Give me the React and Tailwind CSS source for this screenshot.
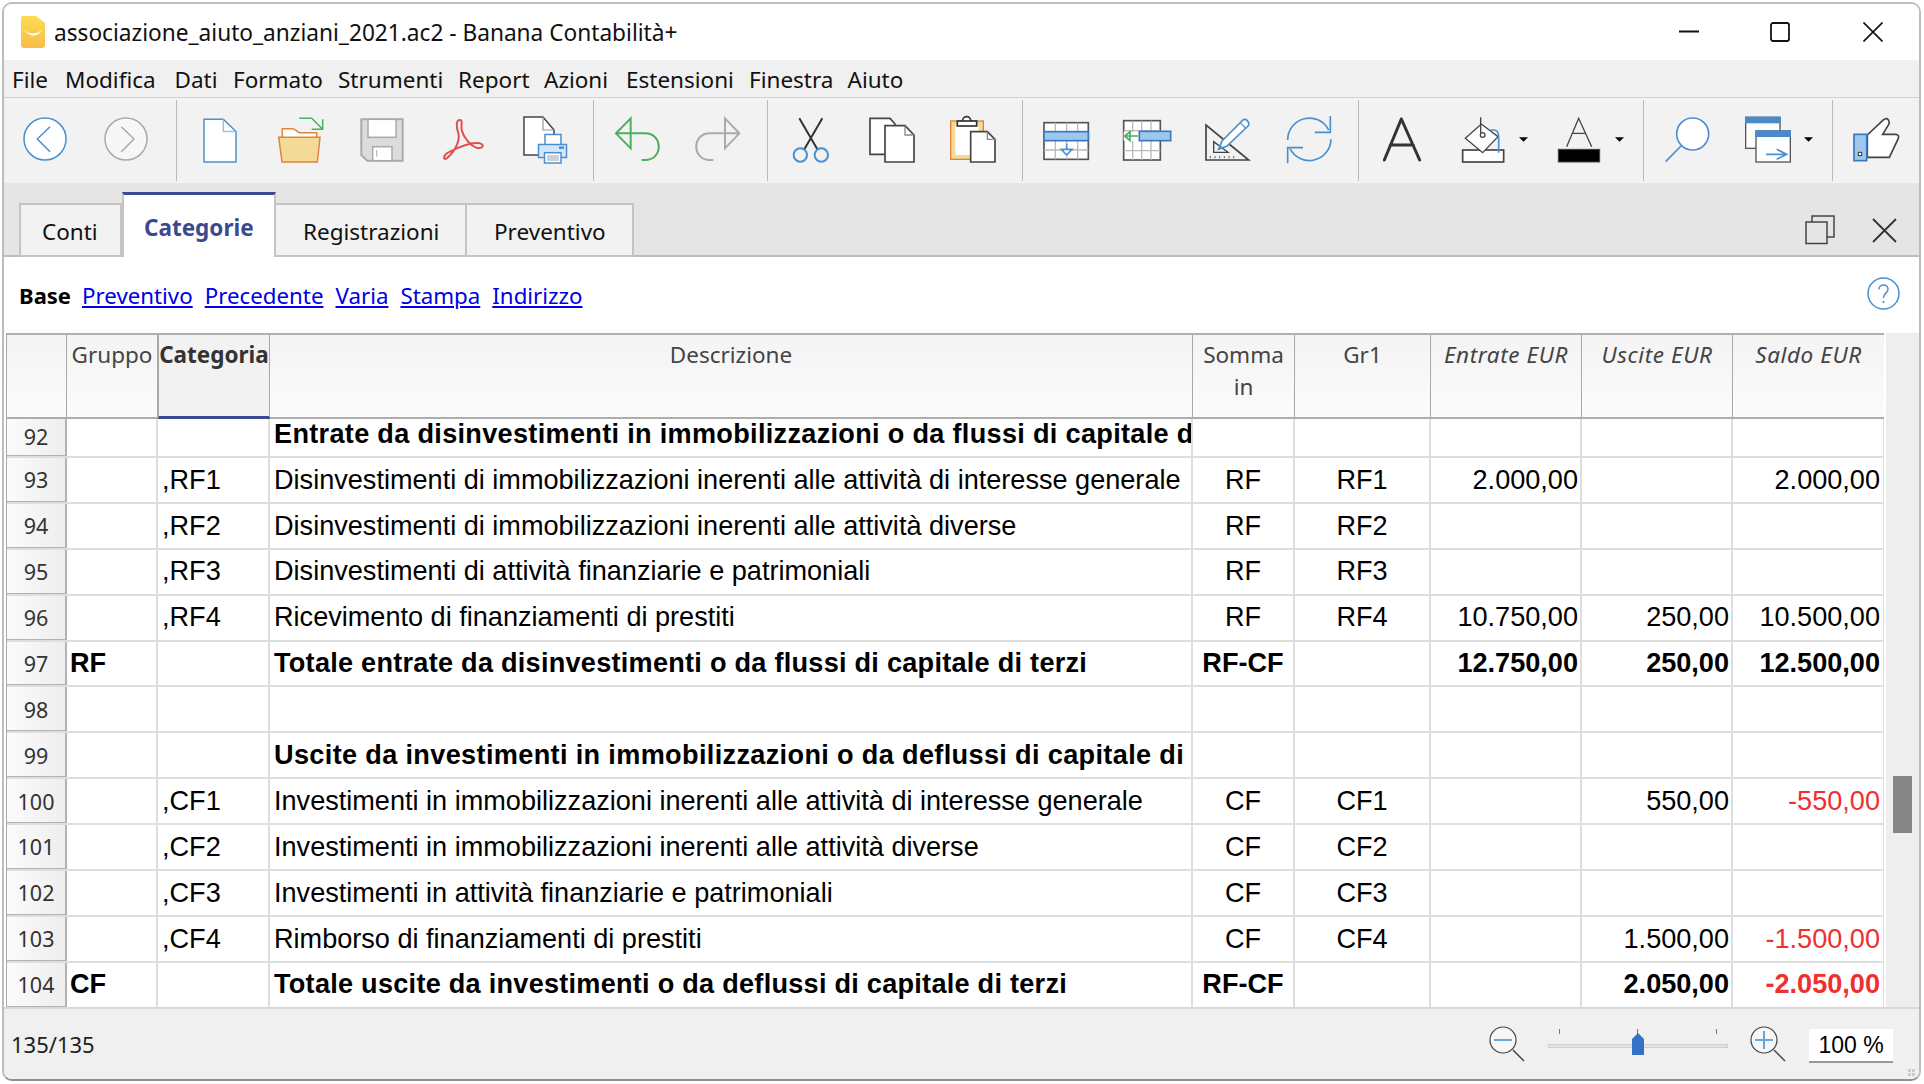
const BLUE = "#4a90d0";
const DARK = "#444";

const menus = [
  ["File", "w-[53px]"],
  ["Modifica", "w-[109.5px]"],
  ["Dati", "w-[58.5px]"],
  ["Formato", "w-[105px]"],
  ["Strumenti", "w-[120px]"],
  ["Report", "w-[86px]"],
  ["Azioni", "w-[82px]"],
  ["Estensioni", "w-[123px]"],
  ["Finestra", "w-[98.5px]"],
  ["Aiuto", "w-[60px]"],
];

const rows = [
  { n: 92, desc: "Entrate da disinvestimenti in immobilizzazioni o da flussi di capitale di terzi", bold: true, first: true, spacing: "tracking-[0.31px]" },
  { n: 93, cat: ",RF1", desc: "Disinvestimenti di immobilizzazioni inerenti alle attività di interesse generale", som: "RF", gr: "RF1", ent: "2.000,00", sal: "2.000,00" },
  { n: 94, cat: ",RF2", desc: "Disinvestimenti di immobilizzazioni inerenti alle attività diverse", som: "RF", gr: "RF2" },
  { n: 95, cat: ",RF3", desc: "Disinvestimenti di attività finanziarie e patrimoniali", som: "RF", gr: "RF3" },
  { n: 96, cat: ",RF4", desc: "Ricevimento di finanziamenti di prestiti", som: "RF", gr: "RF4", ent: "10.750,00", usc: "250,00", sal: "10.500,00" },
  { n: 97, grp: "RF", desc: "Totale entrate da disinvestimenti o da flussi di capitale di terzi", som: "RF-CF", ent: "12.750,00", usc: "250,00", sal: "12.500,00", bold: true, spacing: "tracking-[0.26px]" },
  { n: 98 },
  { n: 99, desc: "Uscite da investimenti in immobilizzazioni o da deflussi di capitale di terzi", bold: true, spacing: "tracking-[0.35px]" },
  { n: 100, cat: ",CF1", desc: "Investimenti in immobilizzazioni inerenti alle attività di interesse generale", som: "CF", gr: "CF1", usc: "550,00", sal: "-550,00" },
  { n: 101, cat: ",CF2", desc: "Investimenti in immobilizzazioni inerenti alle attività diverse", som: "CF", gr: "CF2" },
  { n: 102, cat: ",CF3", desc: "Investimenti in attività finanziarie e patrimoniali", som: "CF", gr: "CF3" },
  { n: 103, cat: ",CF4", desc: "Rimborso di finanziamenti di prestiti", som: "CF", gr: "CF4", usc: "1.500,00", sal: "-1.500,00" },
  { n: 104, grp: "CF", desc: "Totale uscite da investimenti o da deflussi di capitale di terzi", som: "RF-CF", usc: "2.050,00", sal: "-2.050,00", bold: true, spacing: "tracking-[0.26px]" },
];

// icons are drawn in screen coordinates, the viewBox picks out the button's slice
const Btn = ({ from, to, children }) => (
  <svg width={to - from} height={85} viewBox={`${from} 98 ${to - from} 85`} fill="none" className="shrink-0">
    {children}
  </svg>
);

const Z = ({ x, children }) => <g transform={`translate(${x} 100) scale(${1 / 3})`}>{children}</g>;

const Sep = () => <div className="w-px h-[81px] mt-[2px] bg-[#b9b9b9] shrink-0" />;

const Caret = ({ x }) => <path d={`M${x} 112h27l-13.500 13z`} fill="#000" />;

const Toolbar = () => (
  <div className="flex h-[85px] bg-[#f2f2f2] shrink-0">
    <Btn from={4} to={86}>
      <circle cx="45" cy="139" r="21" fill="#fff" stroke={BLUE} strokeWidth="1.500" />
      <path d="M50 126.700L37.300 139L50 151.700" stroke={BLUE} strokeWidth="1.500" />
    </Btn>
    <Btn from={86} to={176}>
      <circle cx="126" cy="139" r="21" fill="#f7f7f7" stroke="#aaa" strokeWidth="1.500" />
      <path d="M121.300 126.700L134 139L121.300 151.700" stroke="#aaa" strokeWidth="1.500" />
    </Btn>
    <Sep />
    <Btn from={177} to={258}>
      <path d="M204 119.300H223.300L236 131.500V162H204Z" fill="#fff" stroke={BLUE} strokeWidth="1.500" />
      <path d="M223.300 119.300V131.500H236" stroke="#9cc3e6" strokeWidth="1.500" />
    </Btn>
    <Btn from={258} to={340}>
      <path d="M299.300 118.300H311.700L322.700 129.300M322.700 119.300V129.300H311.700" stroke="#4caf60" strokeWidth="1.500" />
      <path d="M282.300 137.300V128.700H293.300L299.300 132.700H316.700V137.300" fill="#fff" stroke="#e0843c" strokeWidth="1.500" />
      <path d="M278.700 137.300H320L317.300 162H282Z" fill="#f3da96" stroke="#e0843c" strokeWidth="1.500" />
    </Btn>
    <Btn from={340} to={430}>
      <path d="M361.300 119.300H402.700V160.700H367.300L361.300 155Z" fill="#dcdcdc" stroke="#aaa" strokeWidth="2" />
      <rect x="368" y="119.300" width="28" height="18" fill="#fff" stroke="#aaa" strokeWidth="1.500" />
      <rect x="372.700" y="146.700" width="19.300" height="14" fill="#fff" stroke="#aaa" strokeWidth="1.500" />
      <path d="M376.700 150V156.700" stroke="#aaa" />
    </Btn>
    <Btn from={430} to={515}>
      <Z x={10}>
        <path d="M1350 60C1338 60 1338 80 1345 100C1352 125 1330 160 1310 175C1298 182 1298 165 1320 155C1345 142 1385 125 1410 130C1425 135 1418 147 1400 143C1380 138 1360 110 1355 90C1352 75 1360 60 1350 60Z" stroke="#e05050" strokeWidth="6" />
      </Z>
    </Btn>
    <Btn from={515} to={593}>
      <path d="M524 117H543L554 130V155H524Z" fill="#fff" stroke={DARK} strokeWidth="1.500" />
      <path d="M543 117V130H554" stroke="#999" strokeWidth="1.200" />
      <rect x="545" y="134.500" width="16" height="12" fill="#fff" stroke={BLUE} strokeWidth="1.500" />
      <rect x="538.500" y="144.500" width="28" height="13" fill="#d5e6f6" stroke={BLUE} strokeWidth="1.500" />
      <rect x="559" y="146.500" width="5" height="2.500" fill={BLUE} />
      <rect x="544.500" y="152.700" width="16.500" height="10.300" fill="#fff" stroke={BLUE} strokeWidth="1.500" />
      <path d="M547 156H559M547 158H559M547 160H559" stroke="#888" strokeWidth="0.800" />
    </Btn>
    <Sep />
    <Btn from={594} to={675}>
      <Z x={600}>
        <path d="M92 55L48 100L92 145ZM48 100H135C190 100 190 180 135 180H125" stroke="#4caf60" strokeWidth="6" />
      </Z>
    </Btn>
    <Btn from={675} to={767}>
      <Z x={600}>
        <path d="M375 55L418 100L375 145ZM418 100H330C275 100 275 180 330 180H340" stroke="#aaa" strokeWidth="6" />
      </Z>
    </Btn>
    <Sep />
    <Btn from={768} to={855}>
      <Z x={600}>
        <path d="M598 55L652 148M667 55L613 148" stroke="#333" strokeWidth="6" />
        <circle cx="601" cy="165" r="20" stroke={BLUE} strokeWidth="6" />
        <circle cx="664" cy="165" r="20" stroke={BLUE} strokeWidth="6" />
      </Z>
    </Btn>
    <Btn from={855} to={940}>
      <Z x={600}>
        <path d="M810 55H870L885 72V163H810Z" fill="#fff" stroke={DARK} strokeWidth="5" />
        <path d="M855 77H915L942 105V186H855Z" fill="#fff" stroke={DARK} strokeWidth="5" />
        <path d="M915 77V105H942" stroke="#888" strokeWidth="4" />
      </Z>
    </Btn>
    <Btn from={940} to={1022}>
      <Z x={600}>
        <rect x="1052" y="63" width="98" height="115" fill="#f3da96" stroke="#e0843c" strokeWidth="4" />
        <rect x="1066" y="78" width="70" height="87" fill="#fff" />
        <circle cx="1100" cy="62" r="12" fill="#fff" stroke="#333" strokeWidth="5" />
        <rect x="1072" y="63" width="58" height="15" fill="#fff" stroke="#333" strokeWidth="5" />
        <path d="M1112 95H1162L1185 118V186H1112Z" fill="#fff" stroke={DARK} strokeWidth="5" />
        <path d="M1162 95V118H1185" stroke="#888" strokeWidth="4" />
      </Z>
    </Btn>
    <Sep />
    <Btn from={1023} to={1105}>
      <Z x={600}>
        <rect x="1332" y="68" width="133" height="110" fill="#fff" stroke="#555" strokeWidth="5" />
        <path d="M1366 68V178M1400 68V178M1433 68V178M1332 150H1465" stroke="#bbb" strokeWidth="4" />
        <rect x="1332" y="95" width="133" height="27" fill="#9cc8ee" stroke="#3a78c0" strokeWidth="5" />
        <rect x="1385" y="128" width="30" height="42" fill="#fff" />
        <path d="M1400 130V148M1384 148H1416L1400 165Z" stroke={BLUE} strokeWidth="5" />
      </Z>
    </Btn>
    <Btn from={1105} to={1190}>
      <Z x={1122}>
        <rect x="5" y="62" width="110" height="118" fill="#fff" stroke="#555" strokeWidth="5" />
        <path d="M32 62V180M59 62V180M87 62V180M5 92H115M5 152H115" stroke="#bbb" strokeWidth="4" />
        <rect x="5" y="96" width="46" height="26" fill="#fff" />
        <rect x="52" y="94" width="94" height="28" fill="#9cc8ee" stroke="#3a78c0" strokeWidth="5" />
        <path d="M48 108H12M24 95L8 108L24 122Z" stroke="#4caf60" strokeWidth="5" />
      </Z>
    </Btn>
    <Btn from={1190} to={1270}>
      <Z x={1122}>
        <path d="M252 75V180H380Z" fill="#f2f2f2" stroke={DARK} strokeWidth="5" />
        <path d="M275 125V157H318Z" stroke={DARK} strokeWidth="4" />
        <path d="M265 168V175M279 168V175M293 168V175M307 168V175M321 168V175M335 168V175" stroke="#666" strokeWidth="3" />
        <path d="M290 148L300 123L363 60Q370 56 376 62L380 68Q382 74 378 78L315 138Z" fill="#fff" stroke={BLUE} strokeWidth="5" />
        <path d="M355 68L372 86" stroke={BLUE} strokeWidth="4" />
        <path d="M290 148L295 135L303 143Z" fill={BLUE} />
      </Z>
    </Btn>
    <Btn from={1270} to={1358}>
      <Z x={1122}>
        <path d="M497 120A65 65 0 0 1 620 90M627 118A65 65 0 0 1 504 146" stroke={BLUE} strokeWidth="5" />
        <path d="M625 48V97H578M497 190V143H543" stroke={BLUE} strokeWidth="5" />
      </Z>
    </Btn>
    <Sep />
    <Btn from={1359} to={1440}>
      <Z x={1122}>
        <path d="M787 180L838 57L893 180M805 135H874" stroke="#333" strokeWidth="9" strokeLinecap="round" strokeLinejoin="round" />
      </Z>
    </Btn>
    <Btn from={1440} to={1550}>
      <Z x={1122}>
        <rect x="1022" y="150" width="123" height="36" fill="#fff" stroke={DARK} strokeWidth="5" />
        <path d="M1030 115L1078 72L1128 110L1082 158Z" fill="#fff" stroke={DARK} strokeWidth="4" />
        <path d="M1076 52V100" stroke={DARK} strokeWidth="4" />
        <circle cx="1082" cy="105" r="7" fill="#fff" stroke={DARK} strokeWidth="4" />
        <path d="M1105 90H1116Q1130 90 1130 110V158" stroke={BLUE} strokeWidth="5" />
      </Z>
      <Z x={1500}>
        <Caret x={57} />
      </Z>
    </Btn>
    <Btn from={1550} to={1643}>
      <Z x={1500}>
        <path d="M200 140L236 55L275 140M215 100H258" stroke={DARK} strokeWidth="4" />
        <rect x="175" y="148" width="124" height="38" fill="#000" stroke={DARK} strokeWidth="3" />
        <Caret x={345} />
      </Z>
    </Btn>
    <Sep />
    <Btn from={1644} to={1730}>
      <Z x={1500}>
        <circle cx="578" cy="102" r="48" fill="#fff" stroke={BLUE} strokeWidth="5" />
        <path d="M543 138L497 185" stroke={BLUE} strokeWidth="5" />
      </Z>
    </Btn>
    <Btn from={1730} to={1832}>
      <Z x={1500}>
        <rect x="737" y="52" width="103" height="93" fill="#fff" stroke="#555" strokeWidth="4" />
        <rect x="735" y="50" width="107" height="20" fill="#4a8ac8" />
        <rect x="768" y="93" width="103" height="93" fill="#fff" stroke="#555" strokeWidth="4" />
        <rect x="766" y="91" width="107" height="20" fill="#4a8ac8" />
        <path d="M798 163H860M830 148L860 163L830 178" stroke={BLUE} strokeWidth="5" />
        <Caret x={912} />
      </Z>
    </Btn>
    <Sep />
    <Btn from={1833} to={1919}>
      <Z x={1500}>
        <path d="M1102 105L1150 60Q1165 48 1168 70L1148 103H1188Q1198 105 1195 115L1168 172H1102Z" fill="#fff" stroke={DARK} strokeWidth="5" />
        <rect x="1062" y="103" width="38" height="79" fill="#9cc8ee" stroke="#3a78c0" strokeWidth="5" />
        <rect x="1075" y="157" width="10" height="10" fill="#fff" stroke="#333" strokeWidth="3" />
      </Z>
    </Btn>
  </div>
);

const Tabs = () => (
  <div className="relative flex items-end h-[74px] pl-[15px] pr-[22px] bg-[#e5e5e5] border-b-2 border-[#bdbdbd] shrink-0 font-['Noto_Sans',sans-serif] text-[22.500px] text-[#111]">
    <div className="w-[103px] h-[54px] -mb-[2px] pl-[21px] pt-[10px] bg-[#f2f2f2] border-2 border-[#c4c4c4]">Conti</div>
    <div className="w-[154px] h-[65px] -mb-[2px] pl-[20px] pt-[16px] bg-white border-x-2 border-[#c4c4c4] border-t-[3px] border-t-[#3b4a8f] font-bold text-[#3b4a8f]">Categorie</div>
    <div className="w-[191px] h-[54px] -mb-[2px] pl-[27px] pt-[10px] bg-[#f2f2f2] border-y-2 border-r-2 border-[#c4c4c4]">Registrazioni</div>
    <div className="w-[167px] h-[54px] -mb-[2px] pl-[27px] pt-[10px] bg-[#f2f2f2] border-y-2 border-r-2 border-[#c4c4c4]">Preventivo</div>
    <svg width="30" height="30" viewBox="0 0 30 30" fill="none" className="ml-auto mb-[10px] shrink-0">
      <rect x="7" y="1" width="22" height="21" stroke="#444" strokeWidth="1.500" />
      <rect x="1" y="7" width="21" height="21.500" fill="#e5e5e5" stroke="#444" strokeWidth="1.500" />
    </svg>
    <svg width="25" height="25" viewBox="0 0 25 25" fill="none" className="ml-[37px] mb-[12px] shrink-0">
      <path d="M1 1L24 24M24 1L1 24" stroke="#333" strokeWidth="1.800" />
    </svg>
  </div>
);

const Links = () => (
  <div className="flex items-center h-[76px] pl-[15px] pr-[19px] bg-white shrink-0 font-['Noto_Sans',sans-serif] text-[22.300px] text-[#0000e6]">
    <span className="font-bold text-[22px] text-black mr-[11px]">Base</span>
    <div className="flex gap-[12px] pt-[1px] underline">
      <span>Preventivo</span>
      <span>Precedente</span>
      <span>Varia</span>
      <span>Stampa</span>
      <span>Indirizzo</span>
    </div>
    <svg width="33" height="33" viewBox="0 0 33 33" fill="none" className="ml-auto mb-[4px] shrink-0">
      <circle cx="16.500" cy="16.500" r="15.500" stroke={BLUE} strokeWidth="1.500" />
      <path d="M12 12.500C12 6.500 21 6.500 21 12.500C21 16 16.500 16 16.500 21" stroke={BLUE} strokeWidth="1.500" />
      <circle cx="16.500" cy="25" r="1.100" fill={BLUE} />
    </svg>
  </div>
);

const headCell = "h-full pt-[4px] text-center leading-[32px] border-r border-[#a8a8a8] shrink-0";

const TableHead = () => (
  <div className="flex h-[83.500px] border-b-2 border-[#adadad] bg-linear-to-b from-[#f4f4f4] to-[#fbfbfb] font-['Noto_Sans',sans-serif] text-[22.500px] text-[#444] shrink-0">
    <div className={`${headCell} w-[60px]`} />
    <div className={`${headCell} w-[91px]`}>Gruppo</div>
    <div className="w-[112px] h-[83.500px] pt-[4px] text-center leading-[32px] font-bold text-[#333] bg-[#f2f2f2] border-x border-[#a8a8a8] border-b-[3px] border-b-[#3b4a8f] shrink-0">Categoria</div>
    <div className={`${headCell} w-[923px]`}>Descrizione</div>
    <div className={`${headCell} w-[102px]`}>
      Somma
      <br />
      in
    </div>
    <div className={`${headCell} w-[136px]`}>Gr1</div>
    <div className={`${headCell} w-[151px] italic tracking-[0.6px]`}>Entrate EUR</div>
    <div className={`${headCell} w-[151px] italic tracking-[0.6px]`}>Uscite EUR</div>
    <div className={`${headCell} w-[152px] italic tracking-[0.6px]`}>Saldo EUR</div>
  </div>
);

const cell = "flex items-center h-full overflow-hidden whitespace-nowrap border-r-2 border-[#dedede] shrink-0";

const Row = ({ r }) => {
  const pad = r.first ? "pb-[6px]" : "";
  const red = r.sal && r.sal[0] === "-" ? "text-[#ee3030]" : "";
  return (
    <div className={`flex shrink-0 ${r.first ? "h-[39.500px]" : "h-[45.900px]"} border-b-2 border-[#dedede] font-['Liberation_Sans',sans-serif] text-[27.100px] text-black ${r.bold ? "font-bold" : ""}`}>
      <div className={`flex items-center justify-center w-[60px] h-full -mb-[2px] ${r.first ? "" : "pt-[2px]"} font-['Noto_Sans',sans-serif] font-normal text-[21.500px] text-[#333] bg-linear-to-r from-[#fbfbfb] to-[#eeeeee] border-r-2 border-b border-[#b3b3b3] shrink-0`}>{r.n}</div>
      <div className={`${cell} w-[91px] pl-[3px] ${pad}`}>{r.grp}</div>
      <div className={`${cell} w-[112px] pl-[4px] ${pad}`}>{r.cat}</div>
      <div className={`${cell} w-[923px] pl-[4px] ${r.spacing || ""} ${pad}`}>{r.desc}</div>
      <div className={`${cell} w-[102px] justify-center ${pad}`}>{r.som}</div>
      <div className={`${cell} w-[136px] justify-center ${pad}`}>{r.gr}</div>
      <div className={`${cell} w-[151px] justify-end pr-[2px] ${pad}`}>{r.ent}</div>
      <div className={`${cell} w-[151px] justify-end pr-[2px] ${pad}`}>{r.usc}</div>
      <div className={`${cell} w-[152px] justify-end pr-[3px] ${pad} ${red}`}>{r.sal}</div>
    </div>
  );
};

const StatusBar = () => (
  <div className="relative flex items-center h-[72px] bg-[#f0f0f0] border-t-2 border-[#d8d8d8] pl-[7px] font-['Noto_Sans',sans-serif] text-[22px] text-[#222] grow">
    <span>135/135</span>
    <svg width="44" height="44" viewBox="0 0 44 44" fill="none" className="ml-auto mt-[2px] shrink-0">
      <circle cx="17" cy="17" r="13" fill="#f7f7f7" stroke={DARK} strokeWidth="1.200" />
      <path d="M8 17H26" stroke="#6ea5d8" strokeWidth="2" />
      <path d="M27 27L38 38" stroke={DARK} strokeWidth="1.500" />
    </svg>
    <div className="relative w-[180px] h-[44px] ml-[18px] mt-[6px] shrink-0">
      <div className="absolute left-0 right-0 top-[19px] h-[4px] bg-[#e3e3e3] border border-[#d0d0d0]" />
      <div className="absolute left-[11px] top-[4px] w-px h-[5px] bg-[#777]" />
      <div className="absolute left-[89px] top-[4px] w-px h-[5px] bg-[#777]" />
      <div className="absolute left-[168px] top-[4px] w-px h-[5px] bg-[#777]" />
      <svg width="12" height="22" viewBox="0 0 12 22" className="absolute left-[84px] top-[8px]">
        <path d="M6 0L12 6V22H0V6Z" fill="#3472c9" />
      </svg>
    </div>
    <svg width="44" height="44" viewBox="0 0 44 44" fill="none" className="ml-[19px] mt-[2px] shrink-0">
      <circle cx="17" cy="17" r="13" fill="#f7f7f7" stroke={DARK} strokeWidth="1.200" />
      <path d="M8 17H26M17 8V26" stroke="#6ea5d8" strokeWidth="2" />
      <path d="M27 27L38 38" stroke={DARK} strokeWidth="1.500" />
    </svg>
    <div className="flex items-center justify-center w-[84px] h-[34px] ml-[18px] mr-[26px] mt-[4px] bg-white border-b-2 border-[#999] font-['Liberation_Sans',sans-serif] text-[23px] text-black shrink-0">100 %</div>
    <div className="absolute right-[4px] bottom-[3px] grid grid-cols-2 gap-px">
      <div className="w-[3px] h-[3px] bg-[#ccc]" />
      <div className="w-[3px] h-[3px] bg-[#ccc]" />
      <div className="w-[3px] h-[3px] bg-[#ccc]" />
      <div className="w-[3px] h-[3px] bg-[#ccc]" />
    </div>
  </div>
);

const App = () => {
  return (
    <div className="w-[1924px] h-[1084px] bg-white pt-[2px] pl-[2px]">
      <div className="flex flex-col w-[1919px] h-[1079px] overflow-hidden rounded-[10px] border-2 border-[#bdbdbd] border-b-[#8f8f8f] bg-[#f0f0f0]">
        <div className="flex items-center h-[56px] pl-[17px] bg-white shrink-0">
          <svg width="24" height="32" viewBox="0 0 24 32" className="shrink-0">
            <defs>
              <linearGradient id="logo" x1="0" y1="0" x2="0" y2="1">
                <stop offset="0" stopColor="#fddc50" />
                <stop offset="1" stopColor="#f7bd4c" />
              </linearGradient>
            </defs>
            <path d="M2 0H15L24 7V29Q24 32 21 32H3Q0 32 0 29V2Q0 0 2 0Z" fill="url(#logo)" />
            <path d="M3 14Q12 21 21 14Q13 25 3 14Z" fill="#fff" />
          </svg>
          <span className="ml-[9px] pt-[2px] font-['Noto_Sans',sans-serif] text-[22.660px] text-[#111]">associazione_aiuto_anziani_2021.ac2 - Banana Contabilità+</span>
          <svg width="20" height="22" viewBox="0 0 20 22" fill="none" className="ml-auto shrink-0">
            <path d="M0 10.500H20" stroke="#111" strokeWidth="1.800" />
          </svg>
          <svg width="20" height="20" viewBox="0 0 20 20" fill="none" className="ml-[71px] shrink-0">
            <rect x="1" y="1" width="18" height="18" rx="2" stroke="#111" strokeWidth="1.800" />
          </svg>
          <svg width="20" height="20" viewBox="0 0 20 20" fill="none" className="ml-[73px] mr-[36px] shrink-0">
            <path d="M0.500 0.500L19.500 19.500M19.500 0.500L0.500 19.500" stroke="#111" strokeWidth="1.600" />
          </svg>
        </div>
        <div className="flex items-center h-[37px] pl-[8px] pt-[3px] shrink-0 font-['Noto_Sans',sans-serif] text-[22.500px] text-[#111]">
          {menus.map(([label, width]) => (
            <span key={label} className={`${width} shrink-0`}>{label}</span>
          ))}
        </div>
        <div className="h-px bg-[#d2d2d2] shrink-0" />
        <Toolbar />
        <Tabs />
        <Links />
        <div className="flex h-[674px] pl-[2px] bg-white shrink-0">
          <div className="flex flex-col w-[1878px] overflow-hidden border-l border-[#a8a8a8] border-t-2 border-t-[#b0b0b0] shrink-0">
            <TableHead />
            {rows.map((r) => (
              <Row key={r.n} r={r} />
            ))}
          </div>
          <div className="w-[35px] pl-[7px] pt-[443px] bg-[#eeeeee] border-l-2 border-white shrink-0">
            <div className="w-[19px] h-[57px] bg-[#858585]" />
          </div>
        </div>
        <StatusBar />
      </div>
    </div>
  );
};

export default App;
